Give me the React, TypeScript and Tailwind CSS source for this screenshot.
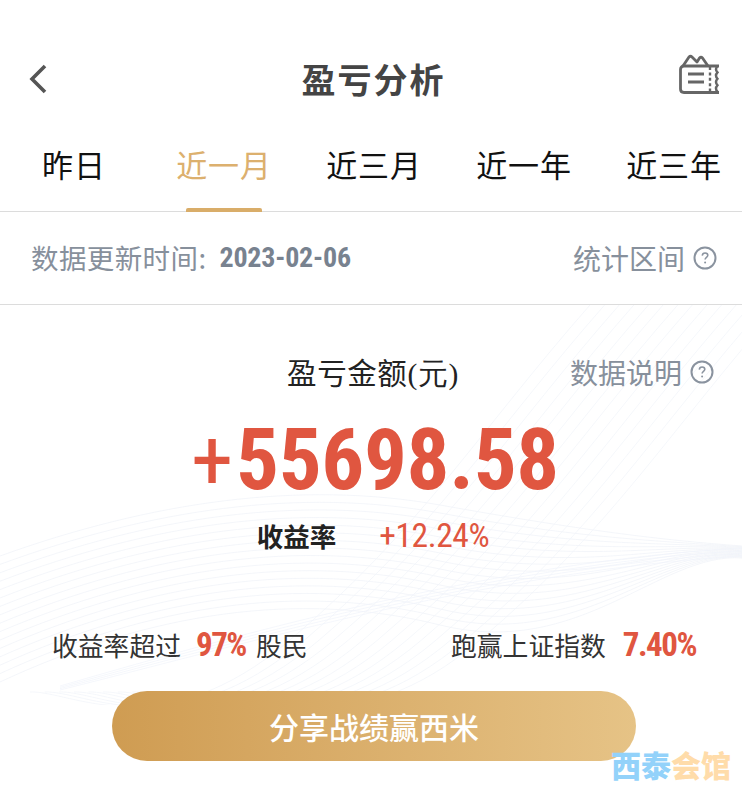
import React from "react";

const num = "font-['Liberation_Sans_Narrow','Roboto_Condensed','Liberation_Sans',sans-serif]";

function Help() {
  return (
    <svg width="24" height="24" viewBox="0 0 24 24" fill="none" stroke="#8a939f" strokeWidth="2">
      <circle cx="12" cy="12" r="10.5" />
      <path d="M9.3 9.6c.1-1.7 1.2-2.6 2.8-2.6 1.6 0 2.7 1 2.7 2.3 0 2-2.7 2.2-2.7 4.3" strokeWidth="1.6" />
      <circle cx="12.1" cy="16.6" r="1" fill="#8a939f" stroke="none" />
    </svg>
  );
}

function Waves() {
  const horizontal = Array.from({ length: 16 }, (_, i) => {
    const t = i / 15;
    const y0 = 556 + t * 126;
    const y1 = 492 + t * 110;
    const y2 = 505 + t * 120;
    const y3 = 546 + t * 12;
    return `M0 ${y0} C150 ${y1 + 10} 300 ${y1 - 12} 440 ${y2} S660 ${y3 - 6} 742 ${y3}`;
  });
  const diagonal = Array.from({ length: 14 }, (_, i) => {
    const t = i / 13;
    const x = 590 + t * 190;
    return `M${x} 305 C${x - 110} 430 ${x - 170} 530 ${x - 300} 640 S${x - 520} 690 ${x - 560} 692`;
  });
  const lower = Array.from({ length: 4 }, (_, i) => {
    const t = i / 3;
    return `M60 ${690 - t * 4} C260 ${640 - t * 12} 500 ${570 - t * 8} 742 ${556 - t * 8}`;
  });
  return (
    <svg className="absolute left-0 top-[305px]" width="742" height="400" viewBox="0 305 742 400" fill="none">
      {horizontal.map((d, i) => <path key={i} d={d} stroke="#eff2f8" strokeWidth="0.7" />)}
      {diagonal.map((d, i) => <path key={i} d={d} stroke="#f1f3f9" strokeWidth="0.7" />)}
      {lower.map((d, i) => <path key={i} d={d} stroke="#f1f3fb" strokeWidth="0.7" />)}
    </svg>
  );
}

export default function App() {
  const tabs = ["昨日", "近一月", "近三月", "近一年", "近三年"];
  return (
    <div className="relative w-[742px] h-[788px] overflow-hidden bg-white font-['Noto_Sans_CJK_SC',sans-serif]">
      <Waves />
      <div className="relative">
        <header className="flex items-center justify-between h-[50px] mt-[54px] pl-[28px] pr-[23px]">
          <div className="w-[40px]">
            <svg width="20" height="30" viewBox="0 0 20 30" fill="none" stroke="#555" strokeWidth="3.6">
              <path d="M17 2 L4 15 L17 28" />
            </svg>
          </div>
          <h1 className="text-[34px] leading-[50px] font-bold text-[#444] tracking-[2px]">盈亏分析</h1>
          <svg className="mb-[10px]" width="40" height="40" viewBox="0 0 40 40" fill="none" stroke="#666" strokeWidth="2.8">
            <path d="M4 12 L10 3 Q11.5 1.5 13 3 L18 8 L20.5 4 Q22 2.5 23.5 4 L29 12" strokeLinejoin="round" />
            <path d="M40 12 H5 Q1.5 12 1.5 15.5 V35 Q1.5 38.5 5 38.5 H40" />
            <path d="M9 20 H25 M9 28 H25" strokeWidth="3" />
            <path d="M31 13 V38" strokeDasharray="3 2.4" strokeWidth="2.4" />
            <path d="M38.5 12 q-3 3.2 0 6.4 q-3 3.2 0 6.4 q-3 3.2 0 6.4 q-3 3.2 0 6.4" strokeWidth="2.4" />
          </svg>
        </header>

        <nav className="grid grid-cols-5 w-[750px] ml-[-1px] h-[104px] mt-[3px]">
          {tabs.map((t, i) => (
            <div key={t} className="relative flex items-start justify-center pt-[34px]">
              <span className={`text-[31px] leading-[46px] tracking-[0.9px] ${i === 1 ? "text-[#dcb06e]" : "text-[#111]"}`}>{t}</span>
              {i === 1 && <span className="absolute bottom-[-1px] h-[4px] w-[76px] bg-[#d9ad69] rounded-t-[2px]" />}
            </div>
          ))}
        </nav>
        <div className="border-t border-[#dcdcdc]" />

        <div className="flex items-center justify-between h-[92px] pl-[31px] pr-[25px] text-[#87909c]">
          <div className="flex items-center">
            <span className="text-[27.5px] tracking-[0.4px]">数据更新时间:</span>
            <span className={`ml-[13px] text-[28px] font-bold tracking-[-0.2px] text-[#78828f] ${num}`}>2023-02-06</span>
          </div>
          <div className="flex items-center gap-[8px]">
            <span className="text-[28px]">统计区间</span>
            <Help />
          </div>
        </div>
        <div className="border-t border-[#dcdcdc]" />

        <div className="relative h-[66px] mt-[37px]">
          <div className="text-center text-[29.5px] leading-[58px] tracking-[0.6px] text-[#222] pl-[4px]">
            盈亏金额<span className="font-['Liberation_Serif',serif]">(元)</span>
          </div>
          <div className="absolute right-[28px] top-[6px] flex items-center gap-[8px] text-[#87909c]">
            <span className="text-[28px] leading-[48px]">数据说明</span>
            <Help />
          </div>
        </div>

        <div className={`flex justify-center items-baseline text-[#e05640] font-bold text-[85px] leading-[86px] mt-[9px] ml-[8px] tracking-[-0.3px] ${num}`}>
          <span className="font-normal mr-[3px]">+</span>55698.58
        </div>

        <div className="flex items-center justify-center h-[40px] mt-[13px] pl-[4px]">
          <span className="text-[26.5px] font-bold text-[#222]">收益率</span>
          <span className={`ml-[43px] text-[33.5px] tracking-[-0.4px] text-[#e05640] ${num}`}>+12.24%</span>
        </div>

        <div className="flex justify-between items-center h-[44px] mt-[67px] pl-[52px] pr-[46px]">
          <div className="flex items-center">
            <span className="text-[25.8px] text-[#333]">收益率超过</span>
            <span className={`ml-[15px] mr-[10px] text-[33px] font-bold tracking-[-1.5px] text-[#e05640] ${num}`}>97%</span>
            <span className="text-[25.8px] text-[#333]">股民</span>
          </div>
          <div className="flex items-center">
            <span className="text-[25.8px] text-[#333]">跑赢上证指数</span>
            <span className={`ml-[17px] text-[33px] font-bold tracking-[-1.5px] text-[#e05640] ${num}`}>7.40%</span>
          </div>
        </div>

        <div className="flex justify-center mt-[24px]">
          <button className="ml-[6px] w-[524px] h-[70px] rounded-full bg-gradient-to-r from-[#cf9c52] to-[#e6c386] text-white text-[30px] font-medium">
            分享战绩赢西米
          </button>
        </div>
      </div>
      <div className="absolute left-[611px] top-[746px] text-[30px] leading-[36px] font-black whitespace-nowrap">
        <span className="text-[#93d2fa]">西泰</span><span className="text-[#ffdcaa]">会馆</span>
      </div>
    </div>
  );
}
